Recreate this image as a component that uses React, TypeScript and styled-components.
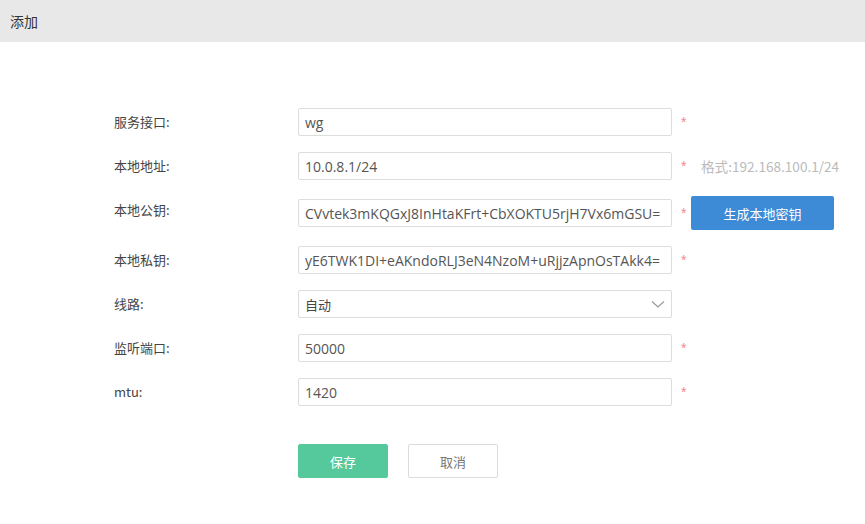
import styled, { createGlobalStyle } from 'styled-components'

const GlobalStyle = createGlobalStyle`
  html, body {
    margin: 0;
    padding: 0;
    background: #fff;
    font-family: "Noto Sans CJK SC", "Liberation Sans", sans-serif;
    font-size: 14px;
    color: #333;
  }
  * { box-sizing: border-box; }
`

const Page = styled.div`
  width: 865px;
  min-height: 524px;
  background: #fff;
`

const Header = styled.div`
  height: 42px;
  background: #e8e8e8;
  display: flex;
  align-items: center;
  padding-left: 10px;
  font-size: 14px;
  color: #333;
`

const Form = styled.div`
  display: flex;
  flex-direction: column;
  gap: 16px;
  padding: 66px 0 0 114px;
`

const Row = styled.div`
  display: flex;
  align-items: flex-start;
  min-height: 28px;
`

const Label = styled.div`
  width: 184px;
  line-height: 28px;
  color: #444;
  font-size: 13px;
`

const Field = styled.div<{ $tall?: boolean }>`
  display: flex;
  align-items: center;
  height: ${p => (p.$tall ? '34px' : '28px')};
`

const Input = styled.input`
  width: 374px;
  height: 28px;
  border: 1px solid #ddd;
  border-radius: 2px;
  padding: 0 6px;
  font-family: "Open Sans", "Noto Sans CJK SC", sans-serif;
  font-size: 14px;
  color: #555;
  outline: none;
  background: #fff;
`

const SelectBox = styled.div`
  width: 374px;
  height: 28px;
  border: 1px solid #ddd;
  border-radius: 2px;
  padding: 0 6px;
  display: flex;
  align-items: center;
  justify-content: space-between;
  font-size: 13px;
  color: #444;

  svg {
    width: 16px;
    height: 16px;
    margin-right: -1px;
  }
`

const Star = styled.span`
  color: #f2888a;
  margin-left: 9px;
  width: 10px;
  font-family: "Liberation Sans", sans-serif;
  font-size: 14px;
`

const Hint = styled.span`
  margin-left: 10px;
  color: #bbb;
  font-size: 13.6px;
  font-family: "Noto Sans CJK SC", sans-serif;
`

const GenButton = styled.button`
  width: 143px;
  height: 34px;
  border: none;
  border-radius: 2px;
  background: #3d8bd6;
  color: #fff;
  font-family: "Noto Sans CJK SC", sans-serif;
  font-size: 13px;
  cursor: pointer;
`

const Actions = styled.div`
  display: flex;
  gap: 20px;
  margin: 22px 0 0 184px;
`

const ActionButton = styled.button<{ $primary?: boolean }>`
  width: 90px;
  height: 34px;
  border-radius: 2px;
  border: 1px solid ${p => (p.$primary ? '#55c99b' : '#dcdcdc')};
  background: ${p => (p.$primary ? '#55c99b' : '#fff')};
  color: ${p => (p.$primary ? '#fff' : '#777')};
  font-family: "Noto Sans CJK SC", sans-serif;
  font-size: 13px;
  cursor: pointer;
`

export default function App() {
  return (
    <Page>
      <GlobalStyle />
      <Header>添加</Header>
      <Form>
        <Row>
          <Label>服务接口:</Label>
          <Field>
            <Input defaultValue="wg" />
            <Star>*</Star>
          </Field>
        </Row>
        <Row>
          <Label>本地地址:</Label>
          <Field>
            <Input defaultValue="10.0.8.1/24" />
            <Star>*</Star>
            <Hint>格式:192.168.100.1/24</Hint>
          </Field>
        </Row>
        <Row>
          <Label>本地公钥:</Label>
          <Field $tall>
            <Input defaultValue="CVvtek3mKQGxJ8InHtaKFrt+CbXOKTU5rjH7Vx6mGSU=" />
            <Star>*</Star>
            <GenButton>生成本地密钥</GenButton>
          </Field>
        </Row>
        <Row>
          <Label>本地私钥:</Label>
          <Field>
            <Input defaultValue="yE6TWK1DI+eAKndoRLJ3eN4NzoM+uRjjzApnOsTAkk4=" />
            <Star>*</Star>
          </Field>
        </Row>
        <Row>
          <Label>线路:</Label>
          <Field>
            <SelectBox>
              <span>自动</span>
              <svg viewBox="0 0 16 16" fill="none" stroke="#999" strokeWidth="1.2">
                <path d="M2 5.5l6 5.5 6-5.5" />
              </svg>
            </SelectBox>
          </Field>
        </Row>
        <Row>
          <Label>监听端口:</Label>
          <Field>
            <Input defaultValue="50000" />
            <Star>*</Star>
          </Field>
        </Row>
        <Row>
          <Label>mtu:</Label>
          <Field>
            <Input defaultValue="1420" />
            <Star>*</Star>
          </Field>
        </Row>
        <Actions>
          <ActionButton $primary>保存</ActionButton>
          <ActionButton>取消</ActionButton>
        </Actions>
      </Form>
    </Page>
  )
}
